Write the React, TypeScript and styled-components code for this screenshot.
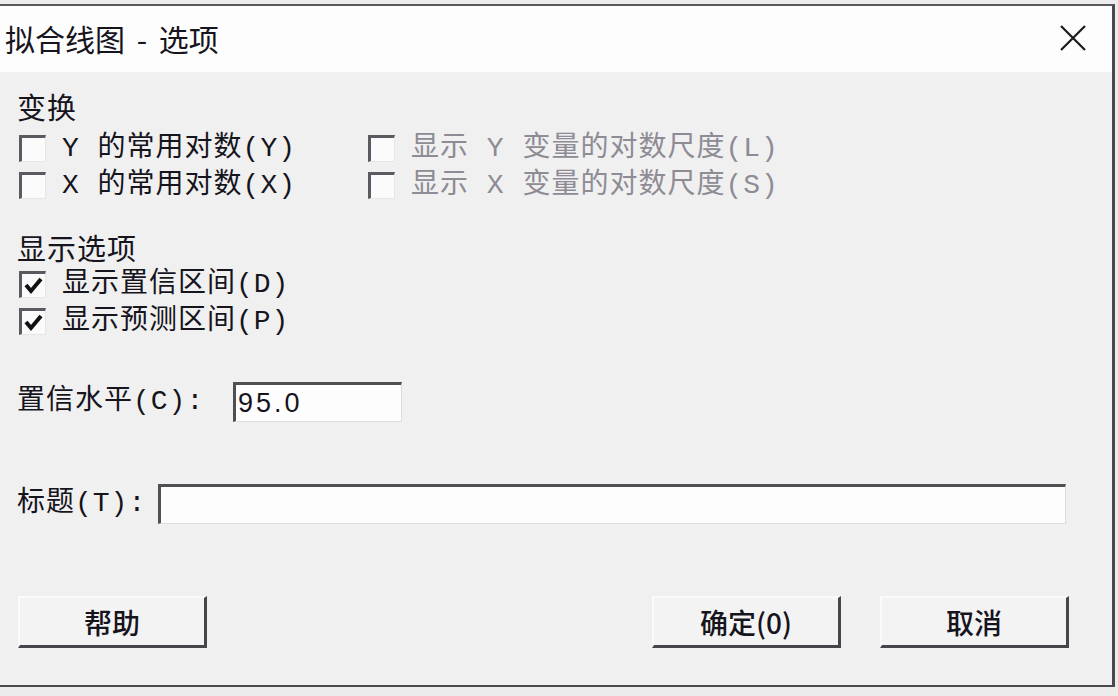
import React from "react"
import styled, { createGlobalStyle } from "styled-components"

const GlobalStyle = createGlobalStyle`
	html, body {
		margin: 0;
		padding: 0;
		background: #ececec;
	}
	body {
		font-family: "Noto Sans CJK SC", "Noto Sans", sans-serif;
		color: #16141c;
	}
`

const MIXED = `"Liberation Mono", "Noto Sans CJK SC", monospace`

interface CheckProps {
	checked?: boolean
	disabled?: boolean
	label: string
}

const Check = (props: CheckProps) => {
	return (
		<CheckRow>
			<Box>
				{props.checked && (
					<svg width="22" height="20" viewBox="0 0 22 20">
						<path d="M3 9 L8 15 L18 3" fill="none" stroke="#111" strokeWidth="4" strokeLinejoin="miter" />
					</svg>
				)}
			</Box>
			<CheckLabel disabled={props.disabled}>{props.label}</CheckLabel>
		</CheckRow>
	)
}

export default function App() {
	return (
		<Page>
			<GlobalStyle />
			<Window>
				<TitleBar>
					<Title>拟合线图 - 选项</Title>
					<CloseIcon width="28" height="28" viewBox="0 0 28 28">
						<path d="M2 2 L26 26 M26 2 L2 26" stroke="#1a1a1a" strokeWidth="2.2" />
					</CloseIcon>
				</TitleBar>
				<Body>
					<Heading>变换</Heading>
					<TwoCols>
						<Check label="Y 的常用对数(Y)" />
						<Check disabled label="显示 Y 变量的对数尺度(L)" />
						<Check label="X 的常用对数(X)" />
						<Check disabled label="显示 X 变量的对数尺度(S)" />
					</TwoCols>
					<Heading spaced>显示选项</Heading>
					<Check checked label="显示置信区间(D)" />
					<Check checked label="显示预测区间(P)" />
					<FieldRow top={42}>
						<FieldLabel width={216}>置信水平(C):</FieldLabel>
						<TextBox width={169}>95.0</TextBox>
					</FieldRow>
					<FieldRow top={62}>
						<FieldLabel width={141}>标题(T):</FieldLabel>
						<TextBox width={908} />
					</FieldRow>
					<ButtonBar>
						<Button>帮助</Button>
						<Spacer />
						<Button>确定(0)</Button>
						<Button>取消</Button>
					</ButtonBar>
				</Body>
			</Window>
		</Page>
	)
}

const Page = styled.div`
	width: 1118px;
	height: 696px;
	padding-top: 4px;
	box-sizing: border-box;
	overflow: hidden;
`

const Window = styled.div`
	width: 1115px;
	height: 683px;
	box-sizing: border-box;
	border-top: 2px solid #5a5a5e;
	border-right: 3px solid #4a4a4e;
	border-bottom: 2px solid #4a4a4e;
	display: flex;
	flex-direction: column;
	background: #f0f0f0;
`

const TitleBar = styled.div`
	height: 66px;
	background: #fdfdfd;
	display: flex;
	align-items: center;
	justify-content: space-between;
	padding: 0 25px 0 5px;
	flex-shrink: 0;
`

const Title = styled.div`
	font-size: 30px;
	line-height: 1;
	word-spacing: 5px;
	color: #16141c;
	margin-top: -2px;
`

const CloseIcon = styled.svg`
	display: block;
	margin-top: -2px;
`

const Body = styled.div`
	flex: 1;
	display: flex;
	flex-direction: column;
	padding: 16px 43px 0 17px;
`

const Heading = styled.div<{ spaced?: boolean }>`
	height: 36px;
	line-height: 36px;
	font-size: 29px;
	letter-spacing: 1px;
	margin-top: ${(p) => (p.spaced ? 25 : 0)}px;
	margin-bottom: ${(p) => (p.spaced ? 1 : 6)}px;
`

const TwoCols = styled.div`
	display: grid;
	grid-template-columns: 349px auto;
`

const CheckRow = styled.div`
	height: 37px;
	display: flex;
	align-items: center;
	padding-left: 2px;
`

const Box = styled.div`
	width: 27px;
	height: 27px;
	box-sizing: border-box;
	border-top: 3px solid #5c5a60;
	border-left: 3px solid #5c5a60;
	border-right: 1px solid #e6e6e6;
	border-bottom: 1px solid #e6e6e6;
	background: #fbfbfb;
	display: flex;
	align-items: center;
	justify-content: center;
	flex-shrink: 0;
`

const CheckLabel = styled.span<{ disabled?: boolean }>`
	margin-left: 16px;
	font-family: ${MIXED};
	font-size: 28px;
	letter-spacing: 1px;
	line-height: 1;
	white-space: pre;
	color: ${(p) => (p.disabled ? "#8e8b94" : "#16141c")};
`

const FieldRow = styled.div<{ top: number }>`
	display: flex;
	align-items: center;
	margin-top: ${(p) => p.top}px;
	height: 40px;
`

const FieldLabel = styled.div<{ width: number }>`
	width: ${(p) => p.width}px;
	flex-shrink: 0;
	font-family: ${MIXED};
	font-size: 28px;
	letter-spacing: 1px;
	line-height: 1;
	white-space: pre;
`

const TextBox = styled.div<{ width: number }>`
	width: ${(p) => p.width}px;
	height: 40px;
	box-sizing: border-box;
	border-top: 3px solid #505054;
	border-left: 3px solid #505054;
	border-right: 1px solid #dcdcdc;
	border-bottom: 1px solid #dcdcdc;
	background: #fdfdfd;
	font-family: "Liberation Sans", Arial, sans-serif;
	font-size: 27px;
	letter-spacing: 3px;
	line-height: 36px;
	padding-left: 2px;
	color: #16141c;
`

const ButtonBar = styled.div`
	display: flex;
	margin-top: 72px;
	gap: 39px;
	padding-left: 1px;
`

const Spacer = styled.div`
	flex: 1;
`

const Button = styled.div`
	width: 189px;
	height: 52px;
	box-sizing: border-box;
	border-top: 2px solid #fafafa;
	border-left: 2px solid #fafafa;
	border-right: 3px solid #45454a;
	border-bottom: 3px solid #45454a;
	background: #f3f3f3;
	display: flex;
	align-items: center;
	justify-content: center;
	font-size: 28px;
	font-weight: 500;
	color: #16141c;
`
